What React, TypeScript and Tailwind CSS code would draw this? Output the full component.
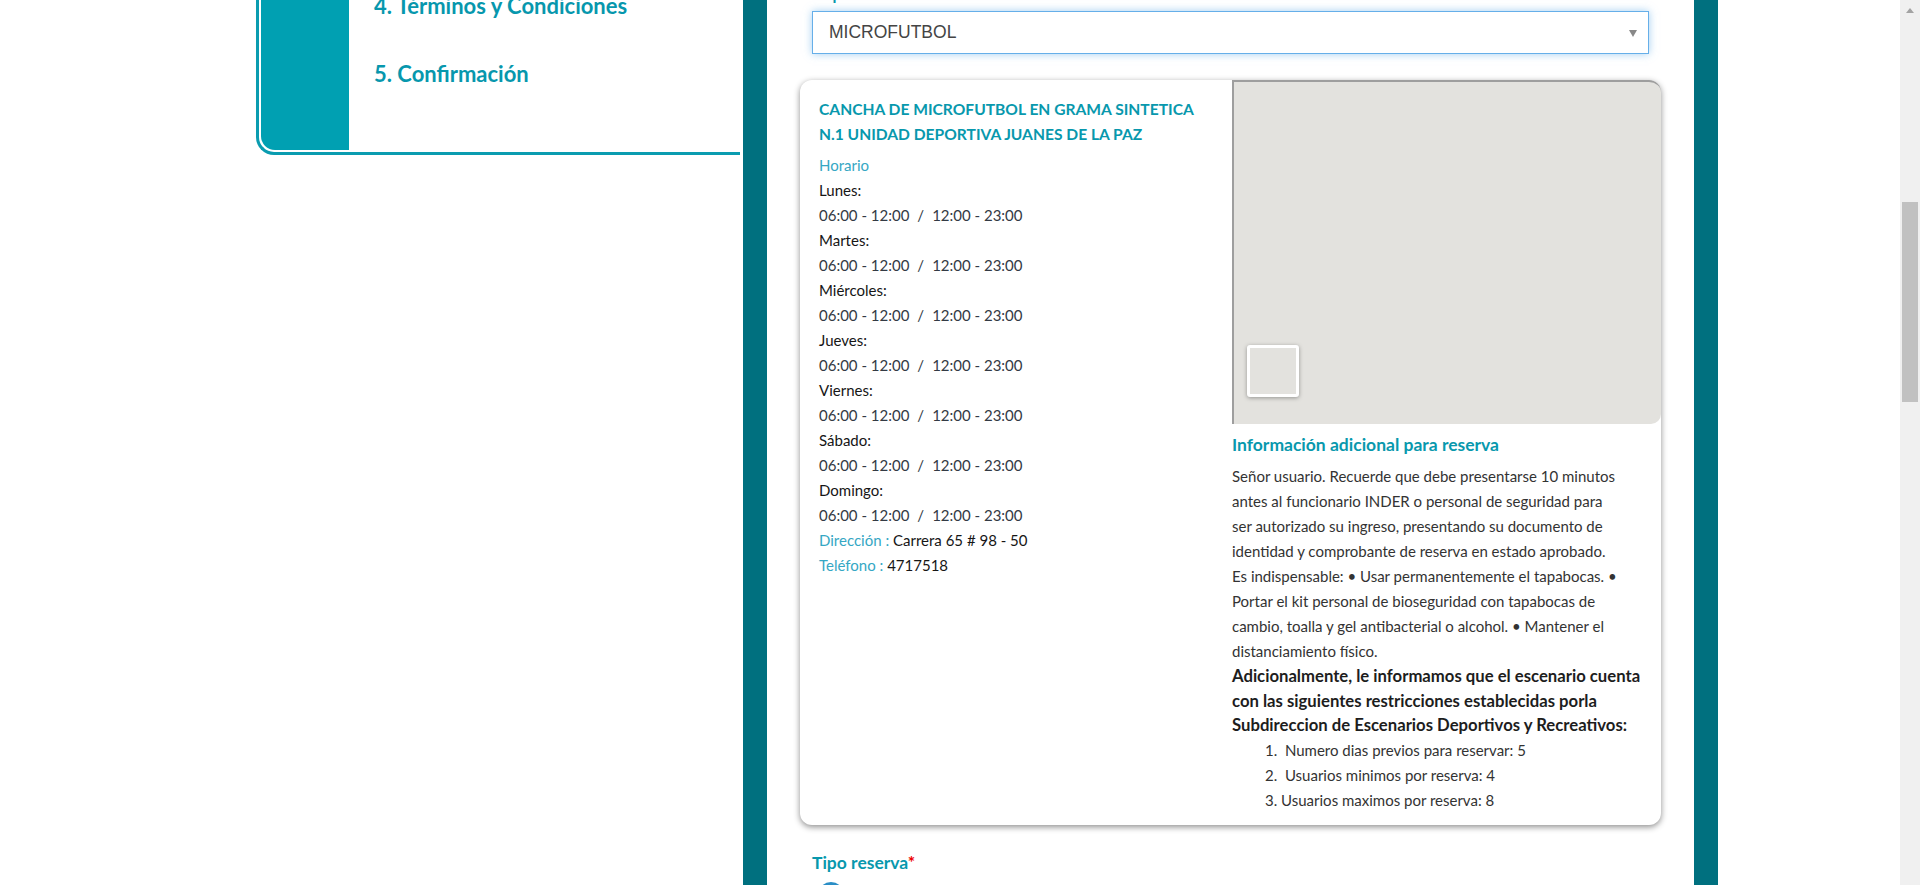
import React from "react";

const days = ["Lunes", "Martes", "Miércoles", "Jueves", "Viernes", "Sábado", "Domingo"];

const Sidebar: React.FC = () => (
  <aside className="w-[484px] shrink-0">
    <div className="-mt-[29px] flex border-l-[3px] border-b-[3px] border-[#0a9cb0] rounded-bl-[18px] pl-[2px] pb-[2px]">
      <div className="w-[88px] shrink-0 bg-[#00a0b2] rounded-bl-[14px]" />
      <ul className="flex-1 pl-[25px] pb-[43px] text-[22px] font-bold text-[#0797ad]">
        <li className="h-[68px] flex items-center">4. Términos y Condiciones</li>
        <li className="h-[68px] flex items-center">5. Confirmación</li>
      </ul>
    </div>
  </aside>
);

const Schedule: React.FC = () => (
  <div className="w-[432px] shrink-0 pl-[19px] pt-[17px] pr-3">
    <h2 className="text-[15.6px] font-bold uppercase leading-[24.5px] text-[#0898ad]">
      Cancha de microfutbol en grama sintetica
      <br />
      N.1 unidad deportiva juanes de la paz
    </h2>
    <div className="mt-[7px] text-[15px] leading-[25px]">
      <p className="text-[#35a7c4]">Horario</p>
      {days.map((d) => (
        <div key={d}>
          <p className="text-[#161616]">{d}:</p>
          <p className="text-[#333a44]">
            06:00 - 12:00<span className="mx-[8px]">/</span>12:00 - 23:00
          </p>
        </div>
      ))}
      <p>
        <span className="text-[#35a7c4]">Dirección :</span>
        <span className="text-[#161616]"> Carrera 65 # 98 - 50</span>
      </p>
      <p>
        <span className="text-[#35a7c4]">Teléfono :</span>
        <span className="text-[#161616]"> 4717518</span>
      </p>
    </div>
  </div>
);

const ExtraInfo: React.FC = () => (
  <div className="flex-1 min-w-0">
    <div className="relative h-[344px] bg-[#e3e2de] border-t-2 border-l-2 border-[#9e9e9e] rounded-tr-[12px] rounded-br-[10px]">
      <div className="absolute left-[13px] bottom-[27px] w-[52px] h-[52px] rounded-[3px] border-[3px] border-white bg-[#e3e2de] shadow-[0_1px_4px_rgba(0,0,0,0.35)]" />
    </div>
    <div className="pr-2 pb-[12px] text-[15px] leading-[25px] text-[#333]">
      <h3 className="mt-[8px] mb-[7px] text-[17.5px] font-bold text-[#0898ad]">Información adicional para reserva</h3>
      <p className="whitespace-nowrap">
        Señor usuario. Recuerde que debe presentarse 10 minutos
        <br />
        antes al funcionario INDER o personal de seguridad para
        <br />
        ser autorizado su ingreso, presentando su documento de
        <br />
        identidad y comprobante de reserva en estado aprobado.
        <br />
        Es indispensable: • Usar permanentemente el tapabocas. •
        <br />
        Portar el kit personal de bioseguridad con tapabocas de
        <br />
        cambio, toalla y gel antibacterial o alcohol. • Mantener el
        <br />
        distanciamiento físico.
      </p>
      <p className="whitespace-nowrap text-[16.7px] leading-[24.5px] font-bold text-[#1d1d1d]">
        Adicionalmente, le informamos que el escenario cuenta
        <br />
        con las siguientes restricciones establecidas porla
        <br />
        Subdireccion de Escenarios Deportivos y Recreativos:
      </p>
      <ol className="pl-[33px]">
        <li>1.&nbsp; Numero dias previos para reservar: 5</li>
        <li>2.&nbsp; Usuarios minimos por reserva: 4</li>
        <li>3. Usuarios maximos por reserva: 8</li>
      </ol>
    </div>
  </div>
);

const App: React.FC = () => {
  return (
    <div className="h-[885px] w-[1920px] overflow-hidden flex bg-white font-['Lato',sans-serif]">
      <div className="flex-1 flex items-start pl-[256px]">
        <Sidebar />
        <main className="ml-[3px] w-[975px] h-[885px] shrink-0 border-x-[24px] border-[#00707f] px-[33px]">
          <div className="px-[12px]">
            <label className="block -mt-[18px] mb-[5px] leading-[24px] text-[16px] font-bold text-[#0898ad]">
              Deporte<span className="text-[#e00]">*</span>
            </label>
            <div className="relative h-[43px] flex items-center px-[16px] border border-[#66afe9] shadow-[0_0_8px_rgba(102,175,233,0.6)] bg-white font-['Liberation_Sans',sans-serif] text-[17.5px] text-[#444]">
              MICROFUTBOL
              <span className="absolute right-[11px] top-[18px] w-0 h-0 border-x-[4px] border-x-transparent border-t-[7px] border-t-[#888]" />
            </div>
          </div>

          <section className="mt-[26px] flex rounded-[12px] bg-white shadow-[0_2px_6px_rgba(0,0,0,0.45)]">
            <Schedule />
            <ExtraInfo />
          </section>

          <div className="px-[12px] mt-[26px]">
            <p className="leading-[24px] text-[17.5px] font-bold text-[#0898ad]">
              Tipo reserva<span className="text-[#e00]">*</span>
            </p>
            <div className="mt-[7px] ml-[6px] w-[26px] h-[26px] rounded-full bg-[#2a8ec6]" />
          </div>
        </main>
      </div>
      <div className="w-[20px] shrink-0 h-[885px] bg-[#f0f0f0] flex flex-col items-center">
        <span className="mt-[8px] w-0 h-0 border-x-[4px] border-x-transparent border-b-[5px] border-b-[#a3a3a3]" />
        <div className="mt-[189px] w-[16px] h-[200px] bg-[#c1c1c1]" />
      </div>
    </div>
  );
};

export default App;
